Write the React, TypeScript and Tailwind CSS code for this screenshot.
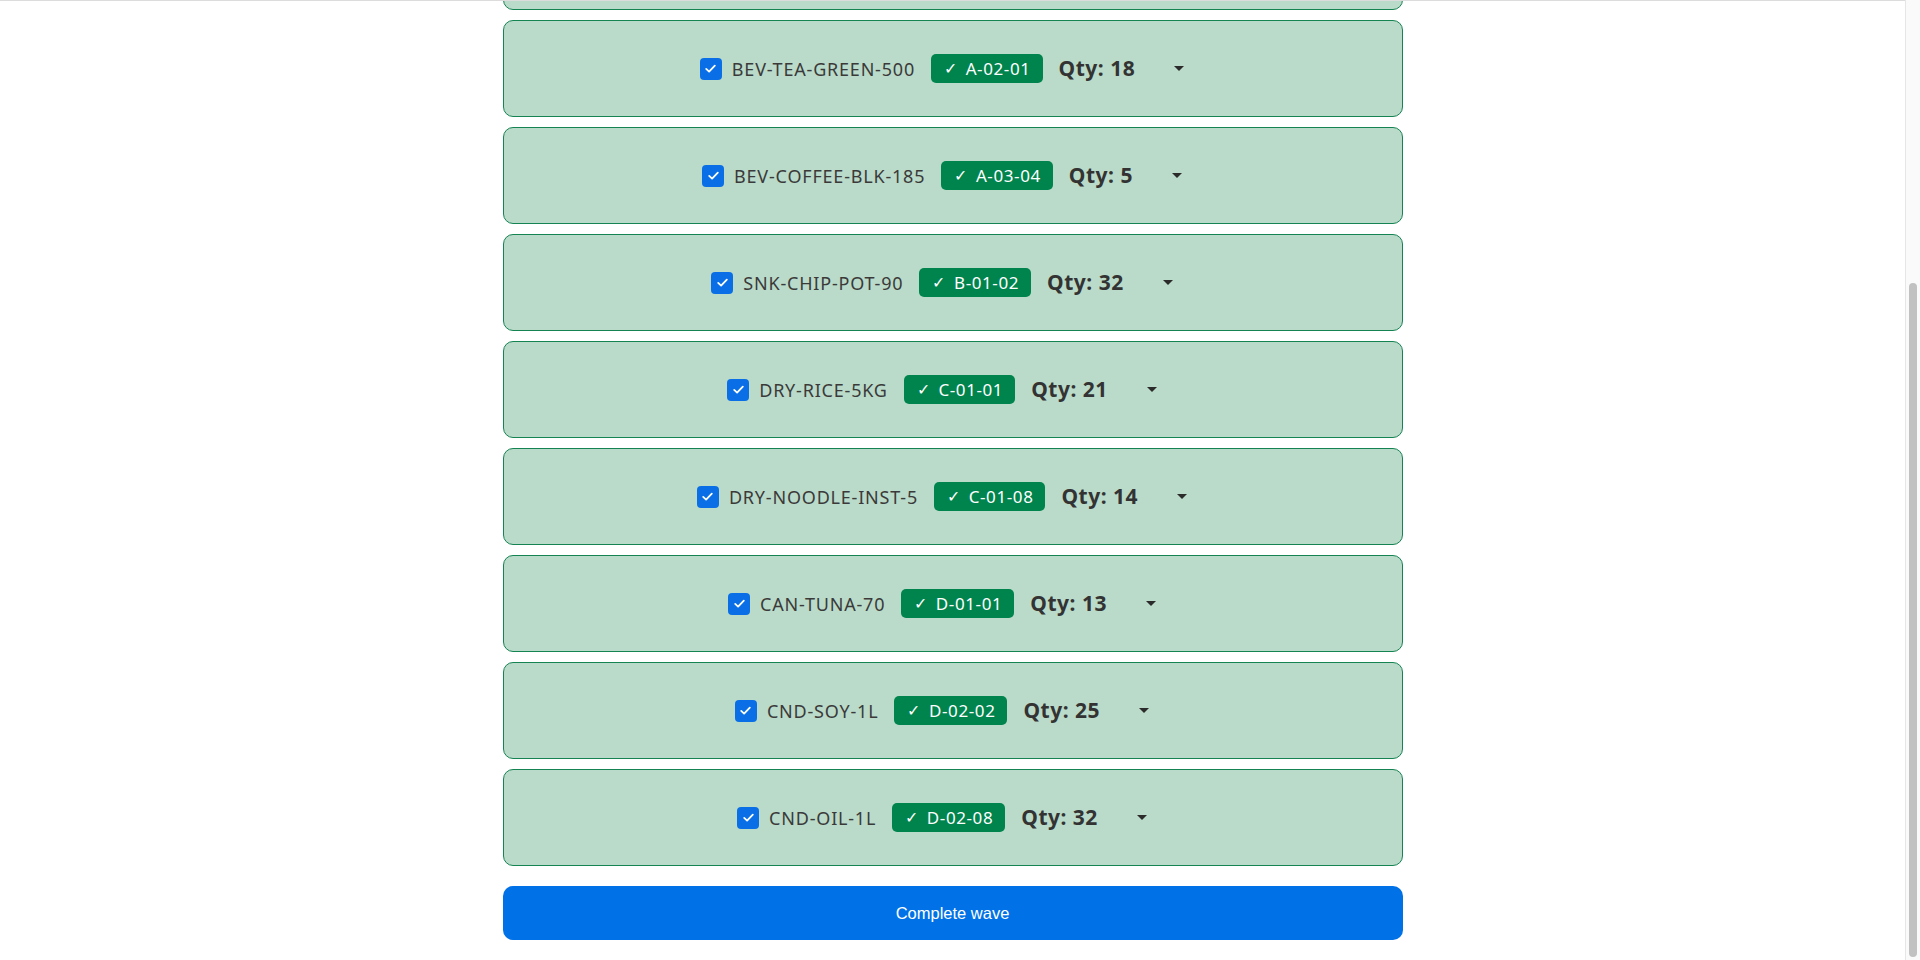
import { useEffect } from "react";

type Pick = {
  sku: string;
  bin: string;
  qty: number;
};

// earlier picks in the wave sit above the fold once the list is scrolled down
const picks: Pick[] = [
  { sku: "BEV-WATER-2L", bin: "A-01-01", qty: 24 },
  { sku: "BEV-JUICE-ORG-1L", bin: "A-01-05", qty: 12 },
  { sku: "BEV-SODA-LMN-350", bin: "A-01-09", qty: 40 },
  { sku: "BEV-TEA-GREEN-500", bin: "A-02-01", qty: 18 },
  { sku: "BEV-COFFEE-BLK-185", bin: "A-03-04", qty: 5 },
  { sku: "SNK-CHIP-POT-90", bin: "B-01-02", qty: 32 },
  { sku: "DRY-RICE-5KG", bin: "C-01-01", qty: 21 },
  { sku: "DRY-NOODLE-INST-5", bin: "C-01-08", qty: 14 },
  { sku: "CAN-TUNA-70", bin: "D-01-01", qty: 13 },
  { sku: "CND-SOY-1L", bin: "D-02-02", qty: 25 },
  { sku: "CND-OIL-1L", bin: "D-02-08", qty: 32 },
];

const font = { fontFamily: '"Noto Sans", "Open Sans", sans-serif' };

const CheckBox = () => (
  <span className="w-[22px] h-[22px] rounded-[4px] bg-[#0a6fe6] flex items-center justify-center shrink-0">
    <svg width="15" height="15" viewBox="0 0 16 16" fill="none">
      <path
        d="M3.4 8.4 6.5 11.3 12.6 4.9"
        stroke="white"
        strokeWidth="1.9"
        strokeLinecap="round"
        strokeLinejoin="round"
      />
    </svg>
  </span>
);

const PickRow = ({ pick }: { pick: Pick }) => (
  <div className="h-[97px] rounded-[10px] border border-[#168452] bg-[#badbc9] flex items-center justify-center">
    <div className="flex items-center gap-4 h-[29px]">
      <label className="flex items-center gap-[10px]">
        <CheckBox />
        <span className="text-[18px] tracking-[0.8px] text-[#3a3a3a] leading-none">{pick.sku}</span>
      </label>
      <span className="h-[29px] rounded-[5px] bg-[#00844d] text-white flex items-center pl-[13px] pr-[12px] text-[17px] tracking-[0.6px] leading-none">
        <span className="text-[16px] mr-[8px] font-light" style={{ fontFamily: '"DejaVu Sans", sans-serif' }}>
          ✓
        </span>
        {pick.bin}
      </span>
      <span className="text-[21px] font-bold tracking-[0.5px] text-[#333] leading-none">Qty: {pick.qty}</span>
      <button className="h-[29px] pl-[23px] pr-[21px] flex items-center">
        <span className="w-0 h-0 border-l-[5px] border-r-[5px] border-t-[5px] border-l-transparent border-r-transparent border-t-[#2b2b2b]" />
      </button>
    </div>
  </div>
);

// classic page scrollbar, pinned to the bottom of the list
const ScrollTrack = () => (
  <div className="fixed top-0 right-0 bottom-0 w-[15px] bg-[#fafafa] border-l border-[#e6e6e6] flex flex-col pt-[283px] pb-[3px] items-center z-20">
    <div className="flex-1 w-[8px] rounded-full bg-[#c1c1c1]" />
  </div>
);

export default function App() {
  useEffect(() => {
    window.scrollTo(0, document.documentElement.scrollHeight);
  }, []);

  return (
    <div className="bg-white min-h-screen pr-[15px]" style={font}>
      <div className="fixed top-0 left-0 right-0 h-px bg-[#dcdcdc] z-10" />
      <ScrollTrack />
      <div className="max-w-[900px] mx-auto py-5 flex flex-col gap-[10px]">
        <div className="h-[75px] flex items-center">
          <h1 className="text-[26px] font-bold text-[#333]">Wave W-0412 · Zone A–D</h1>
        </div>
        {picks.map((p) => (
          <PickRow key={p.sku} pick={p} />
        ))}
        <button
          className="mt-[10px] h-[54px] rounded-[10px] bg-[#0071e6] text-white text-[16.5px]"
          style={{ fontFamily: '"Liberation Sans", Arial, sans-serif' }}
        >
          Complete wave
        </button>
      </div>
    </div>
  );
}
